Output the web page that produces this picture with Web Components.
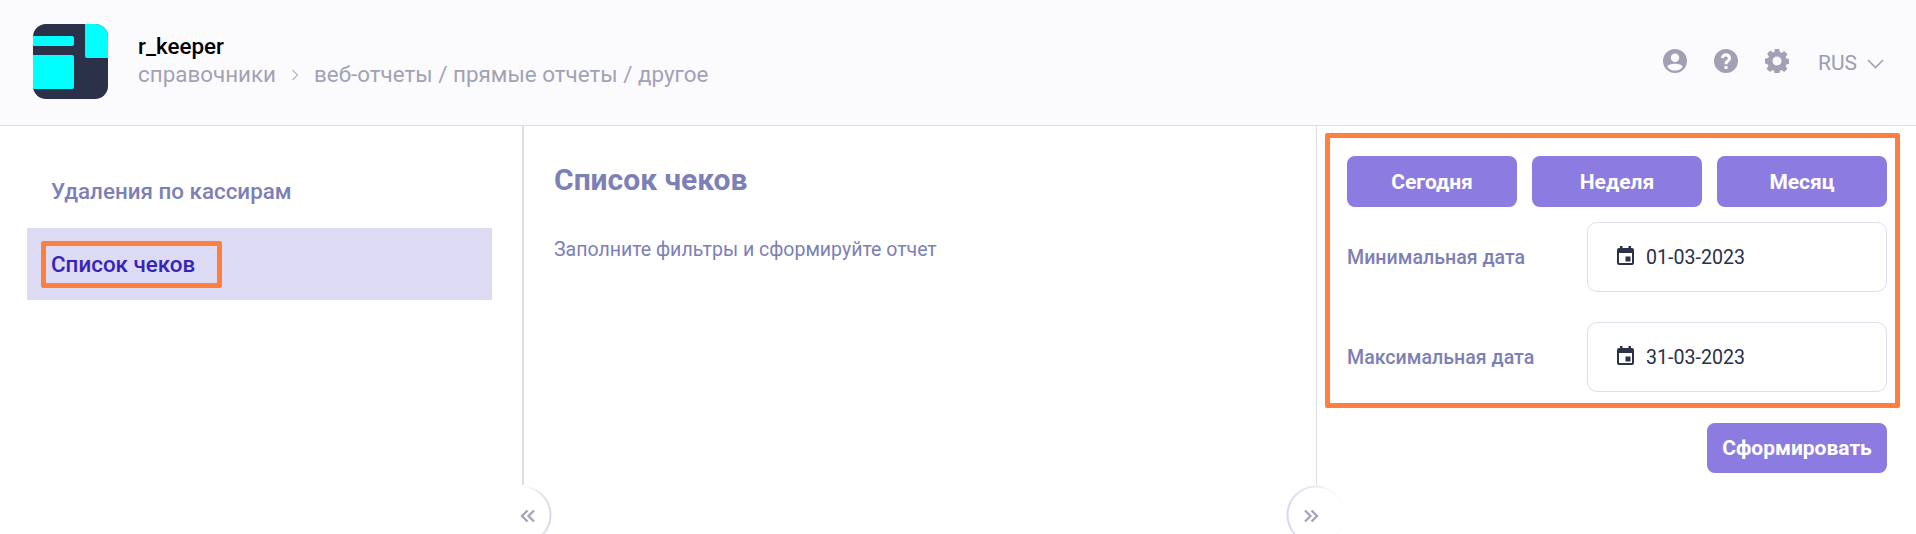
<!DOCTYPE html>
<html lang="ru">
<head>
<meta charset="utf-8">
<title>r_keeper</title>
<style>
  html, body { margin: 0; height: 100%; background: #fff; }
  body { font-family: Roboto, "Liberation Sans", sans-serif; overflow: hidden; }
</style>
</head>
<body>
<rk-app></rk-app>

<script>
(function() {
  const ICONS = {
    user: '<path fill="currentColor" fill-rule="evenodd" d="M12 0a12 12 0 1 0 0 24 12 12 0 0 0 0-24zm0 4.600a4.200 4.200 0 1 1 0 8.400 4.200 4.200 0 0 1 0-8.400zm0 17a9.600 9.600 0 0 1-7.700-3.900c.5-1.900 4-3 7.700-3s7.200 1.100 7.700 3a9.600 9.600 0 0 1-7.700 3.900z"/>',
    help: '<path fill="currentColor" fill-rule="evenodd" d="M12 0a12 12 0 1 0 0 24 12 12 0 0 0 0-24zm1.500 20h-3v-3h3zm2.600-8.300c-.9 1.100-2.600 1.700-2.600 3.600h-3c0-3 1.800-3.800 2.700-4.700.7-.7.9-1.500.5-2.200-.4-.7-1.100-1-1.800-1-1.200 0-2 .8-2.300 2.100l-2.800-.7C7.400 6 9.400 4.200 12 4.200c2 0 3.800 1 4.600 2.700.7 1.600.5 3.400-.5 4.800z"/>',
    gear: '<path fill="currentColor" fill-rule="evenodd" d="M9.700 0h4.600l.6 3.200 1.600.7 2.700-1.800 3.200 3.200-1.800 2.700.7 1.600 3.200.6v4.600l-3.200.6-.7 1.600 1.800 2.700-3.200 3.200-2.700-1.800-1.600.7-.6 3.200H9.700l-.6-3.200-1.600-.7-2.700 1.800-3.200-3.200 1.800-2.700-.7-1.600L0 14.300V9.700l3.200-.6.7-1.600-1.800-2.700 3.200-3.200 2.700 1.800 1.600-.7zM12 7.500a4.500 4.500 0 1 0 0 9 4.500 4.500 0 0 0 0-9z"/>',
    calendar: '<path fill="currentColor" fill-rule="evenodd" d="M3 0h2.500v2h6V0H14v2h1a2 2 0 0 1 2 2v13a2 2 0 0 1-2 2H2a2 2 0 0 1-2-2V4a2 2 0 0 1 2-2h1zM2 7v10h13V7zm6.500 3.500h5v5h-5z"/>'
  };

  class RkIcon extends HTMLElement {
    connectedCallback() {
      const w = this.getAttribute("w") || 24;
      const h = this.getAttribute("h") || 24;
      this.attachShadow({ mode: "open" }).innerHTML = `
        <style>:host { display: block; flex: none; width: ${w}px; height: ${h}px; } svg { display: block; }</style>
        <svg width="${w}" height="${h}" viewBox="0 0 ${w} ${h}">${ICONS[this.getAttribute("name")]}</svg>`;
    }
  }
  customElements.define("rk-icon", RkIcon);

  const headerTpl = document.createElement("template");
  headerTpl.innerHTML = `
    <style>
      :host { display: flex; box-sizing: border-box; height: 126px; padding: 24px 32px 0 33px; background: #fbfbfe; border-bottom: 1px solid #dddcec; }
      .logo { display: block; flex: none; }
      .names { margin: 9px 0 0 30px; flex: 1; }
      .app { font-size: 22.4px; line-height: 26px; font-weight: 500; color: #000; }
      .crumbs { display: flex; align-items: center; margin-top: 2px; font-size: 22.4px; line-height: 26px; color: #a3a2b5; }
      .crumbs svg { margin: 2px 15px 0 15px; }
      .tools { display: flex; height: 24px; margin-top: 25px; color: #a2a1b4; }
      .tools rk-icon { margin-right: 27px; }
      .tools rk-icon:nth-child(3) { margin-right: 29px; }
      .lang { display: flex; align-items: center; padding-top: 4px; font-size: 21px; line-height: 24px; font-weight: 400; color: #9c9cb3; }
      .lang svg { margin: 2px 0 0 10px; }
    </style>
    <svg class="logo" width="75" height="75" viewBox="0 0 75 75">
      <defs><clipPath id="c"><rect width="75" height="75" rx="13"/></clipPath></defs>
      <g clip-path="url(#c)">
        <rect width="75" height="75" fill="#2a3149"/>
        <path fill="#00ffff" d="M52 0h23v34H54a2 2 0 0 1-2-2z"/>
        <path fill="#00ffff" d="M0 12h39a2 2 0 0 1 2 2v6a2 2 0 0 1-2 2H0z"/>
        <path fill="#00ffff" d="M0 31h39a2 2 0 0 1 2 2v30a2 2 0 0 1-2 2H0z"/>
      </g>
    </svg>
    <div class="names">
      <div class="app">r_keeper</div>
      <div class="crumbs">
        <span>справочники</span>
        <svg width="8" height="12" viewBox="0 0 8 12"><path d="M1.500 1l5 5-5 5" fill="none" stroke="#b5b4c4" stroke-width="1.200"/></svg>
        <span>веб-отчеты / прямые отчеты / другое</span>
      </div>
    </div>
    <div class="tools">
      <rk-icon name="user"></rk-icon>
      <rk-icon name="help"></rk-icon>
      <rk-icon name="gear"></rk-icon>
      <div class="lang">RUS
        <svg width="17" height="10" viewBox="0 0 17 10"><path d="M1 1l7.500 7.500L16 1" fill="none" stroke="#a2a1b4" stroke-width="1.600"/></svg>
      </div>
    </div>`;

  class RkHeader extends HTMLElement {
    constructor() {
      super();
      this.attachShadow({ mode: "open" });
      this.shadowRoot.appendChild(headerTpl.content.cloneNode(true));
    }
  }
  customElements.define("rk-header", RkHeader);

  const buttonTpl = document.createElement("template");
  buttonTpl.innerHTML = `
    <style>
      :host { display: flex; align-items: center; justify-content: center; box-sizing: border-box; height: 51px; background: #8c7be0; border-radius: 8px; color: #fff; font-size: 21px; font-weight: 700; }
    </style>
    <slot></slot>`;

  class RkButton extends HTMLElement {
    constructor() {
      super();
      this.attachShadow({ mode: "open" });
      this.shadowRoot.appendChild(buttonTpl.content.cloneNode(true));
    }
  }
  customElements.define("rk-button", RkButton);

  const dateTpl = document.createElement("template");
  dateTpl.innerHTML = `
    <style>
      :host { display: flex; align-items: center; justify-content: space-between; color: #7c80b6; font-size: 19.6px; font-weight: 500; }
      .field { display: flex; align-items: center; box-sizing: border-box; width: 300px; height: 70px; padding-left: 29px; background: #fff; border: 1px solid #dfdeee; border-radius: 10px; color: #2a3149; font-size: 19.6px; font-weight: 400; }
      .field span { margin-left: 12px; }
      .field rk-icon { margin-top: -3px; }
    </style>
    <span class="label"></span>
    <div class="field"><rk-icon name="calendar" w="17" h="19"></rk-icon><span class="value"></span></div>`;

  class RkDate extends HTMLElement {
    constructor() {
      super();
      this.attachShadow({ mode: "open" });
      this.shadowRoot.appendChild(dateTpl.content.cloneNode(true));
    }
    connectedCallback() {
      this.shadowRoot.querySelector(".label").textContent = this.getAttribute("label");
      this.shadowRoot.querySelector(".value").textContent = this.getAttribute("value");
    }
  }
  customElements.define("rk-date", RkDate);

  const markTpl = document.createElement("template");
  markTpl.innerHTML = `
    <style>
      :host { display: inline-block; box-sizing: border-box; padding: 0 22px 0 5px; height: 47px; line-height: 36px; border: 5px solid #ff7f41; border-radius: 2px; }
    </style>
    <slot></slot>`;

  class RkMark extends HTMLElement {
    constructor() {
      super();
      this.attachShadow({ mode: "open" });
      this.shadowRoot.appendChild(markTpl.content.cloneNode(true));
    }
  }
  customElements.define("rk-mark", RkMark);

  // collapse button sitting on a column divider, half clipped by the page bottom
  const toggleTpl = document.createElement("template");
  toggleTpl.innerHTML = `
    <style>
      :host { position: absolute; top: 485px; width: 60px; height: 49px; overflow: hidden; }
      :host([side="left"]) { left: 492px; }
      :host([side="right"]) { left: 1286px; }
      svg { position: absolute; display: block; }
      .disc { left: 0; top: 0; }
      .arrows { top: 24px; }
      :host([side="left"]) .arrows { left: 28px; }
      :host([side="right"]) .arrows { left: 17px; }
    </style>
    <svg class="disc" width="60" height="60" viewBox="0 0 60 60">
      <defs>
        <linearGradient id="edge" x1="0" x2="1" y1="0" y2="0">
          <stop class="a" offset="0"></stop>
          <stop class="m" offset="0.5"></stop>
          <stop class="b" offset="1"></stop>
        </linearGradient>
      </defs>
      <circle cx="30" cy="30" r="28.500" fill="#fff" stroke="url(#edge)" stroke-width="2"/>
    </svg>
    <svg class="arrows" width="16" height="14" viewBox="0 0 16 14"><path d="" fill="none" stroke="#a6a5bb" stroke-width="2.400"/></svg>`;

  class RkToggle extends HTMLElement {
    constructor() {
      super();
      this.attachShadow({ mode: "open" });
      this.shadowRoot.appendChild(toggleTpl.content.cloneNode(true));
    }
    connectedCallback() {
      const left = this.getAttribute("side") === "left";
      const root = this.shadowRoot;
      root.querySelector(".arrows path").setAttribute("d", left
        ? "M7.500 1.500L2 7l5.500 5.500M14 1.500L8.500 7l5.500 5.500"
        : "M2 1.500L7.500 7 2 12.500M8.500 1.500L14 7l-5.500 5.500");
      root.querySelector(".a").setAttribute("stop-color", left ? "#ffffff" : "#d9d8ea");
      root.querySelector(".m").setAttribute("stop-color", left ? "#ffffff" : "#ebeaf4");
      root.querySelector(".b").setAttribute("stop-color", left ? "#d9d8ea" : "#ffffff");
    }
  }
  customElements.define("rk-toggle", RkToggle);

  const appTpl = document.createElement("template");
  appTpl.innerHTML = `
    <style>
      :host { display: block; position: relative; height: 534px; overflow: hidden; color: #7c80b6; }
      .body { display: flex; height: 408px; }
      .side { box-sizing: border-box; width: 524px; flex: none; padding: 33px 30px 0 27px; border-right: 2px solid #dddcec; height: 359px; }
      .item { height: 72px; display: flex; align-items: center; padding-left: 24px; font-size: 22.4px; font-weight: 500; box-sizing: border-box; }
      .side .item:first-child { height: 69px; padding-bottom: 5px; }
      .item.active { background: #dddaf3; color: #3524b8; padding-left: 14px; }
      .main { box-sizing: border-box; width: 793px; flex: none; padding: 34px 30px 0 30px; border-right: 1px solid #dddcec; height: 359px; }
      h1 { margin: 0; font-size: 30px; line-height: 40px; font-weight: 700; color: #7c80b6; }
      p { margin: 36px 0 0; font-size: 19.5px; line-height: 28px; font-weight: 400; color: #7c80b6; }
      .filters { flex: 1; padding: 7px 16px 0 8px; }
      .panel { box-sizing: border-box; width: 575px; height: 275px; padding: 18px 8px 0 17px; border: 5px solid #ff7f41; border-radius: 2px; }
      .quick { display: grid; grid-template-columns: repeat(3, 170px); column-gap: 15px; }
      rk-date { margin-top: 15px; }
      rk-date + rk-date { margin-top: 30px; }
      .submit { display: flex; justify-content: flex-end; margin: 15px 13px 0 0; }
      .submit rk-button { width: 180px; height: 50px; }
    </style>
    <rk-header></rk-header>
    <div class="body">
      <div class="side">
        <div class="item">Удаления по кассирам</div>
        <div class="item active"><rk-mark>Список чеков</rk-mark></div>
      </div>
      <div class="main">
        <h1>Список чеков</h1>
        <p>Заполните фильтры и сформируйте отчет</p>
      </div>
      <div class="filters">
        <div class="panel">
          <div class="quick">
            <rk-button>Сегодня</rk-button>
            <rk-button>Неделя</rk-button>
            <rk-button>Месяц</rk-button>
          </div>
          <rk-date label="Минимальная дата" value="01-03-2023"></rk-date>
          <rk-date label="Максимальная дата" value="31-03-2023"></rk-date>
        </div>
        <div class="submit"><rk-button>Сформировать</rk-button></div>
      </div>
    </div>
    <rk-toggle side="left"></rk-toggle>
    <rk-toggle side="right"></rk-toggle>`;

  class RkApp extends HTMLElement {
    constructor() {
      super();
      this.attachShadow({ mode: "open" });
      this.shadowRoot.appendChild(appTpl.content.cloneNode(true));
    }
  }
  customElements.define("rk-app", RkApp);
})();
</script>
</body>
</html>
